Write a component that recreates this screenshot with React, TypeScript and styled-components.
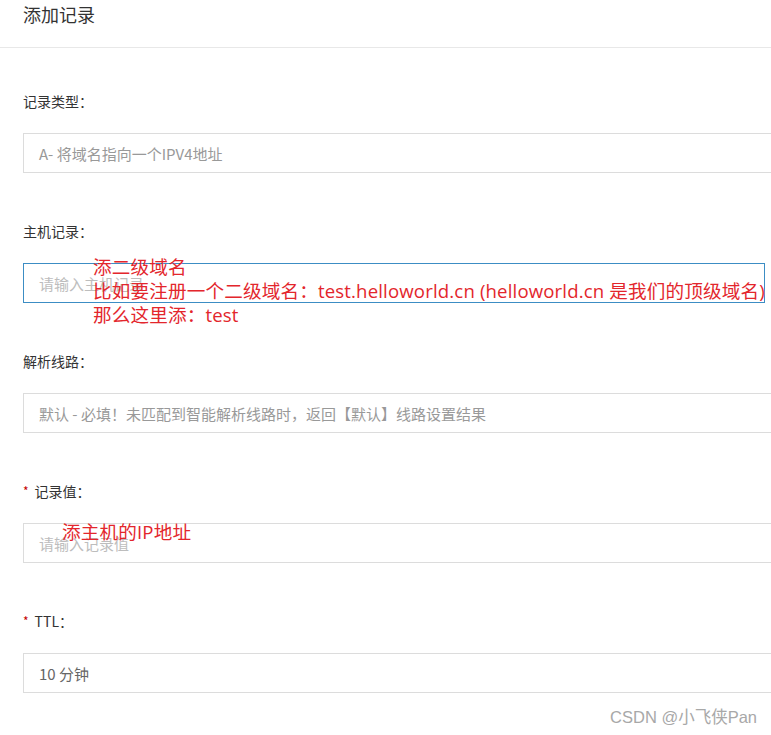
import styled, { createGlobalStyle } from 'styled-components';

const GlobalStyle = createGlobalStyle`
  html, body {
    margin: 0;
    padding: 0;
    background: #fff;
  }
  body {
    font-family: "Noto Sans CJK SC", "Noto Sans", sans-serif;
    overflow: hidden;
  }
`;

const Page = styled.div`
  position: relative;
  width: 771px;
  height: 735px;
  overflow: hidden;
  background: #fff;
`;

const Header = styled.div`
  height: 47px;
  border-bottom: 1px solid #e8e8e8;
  padding-left: 23px;
  box-sizing: content-box;
`;

const Title = styled.h2`
  margin: 0;
  font-size: 18px;
  line-height: 28px;
  font-weight: 400;
  color: #333;
`;

const Form = styled.div`
  display: flex;
  flex-direction: column;
  gap: 48px;
  padding: 43px 0 0 23px;
`;

const Field = styled.div`
  position: relative;
  display: flex;
  flex-direction: column;
  gap: 22px;
`;

const Label = styled.label`
  display: flex;
  align-items: center;
  height: 20px;
  font-size: 14px;
  line-height: 20px;
  color: #333;
`;

const Star = styled.span`
  color: #c40000;
  font-size: 12px;
  line-height: 1;
  margin-right: 6px;
`;

const Box = styled.div<{ $focused?: boolean; $tone?: 'placeholder' | 'value' | 'dark' }>`
  box-sizing: border-box;
  height: 40px;
  width: ${({ $focused }) => ($focused ? '742px' : '780px')};
  border: 1px solid ${({ $focused }) => ($focused ? '#3c8dc4' : '#dcdcdc')};
  padding-left: 15px;
  display: flex;
  align-items: center;
  font-size: 15px;
  color: ${({ $tone }) =>
    $tone === 'placeholder' ? '#bdbdbd' : $tone === 'dark' ? '#666' : '#999'};
  white-space: nowrap;
`;

const Note = styled.div<{ $top: number; $left: number }>`
  position: absolute;
  top: ${({ $top }) => $top}px;
  left: ${({ $left }) => $left}px;
  color: #e3262c;
  font-family: "Open Sans", "Noto Sans CJK SC", sans-serif;
  font-size: 18.6px;
  letter-spacing: 0.15px;
  line-height: 24px;
  white-space: nowrap;
`;

const Watermark = styled.div`
  position: absolute;
  right: 14px;
  bottom: 7px;
  font-size: 16.5px;
  color: #a8a8a8;
  font-family: "Liberation Sans", "Noto Sans CJK SC", sans-serif;
`;

export default function App() {
  return (
    <Page>
      <GlobalStyle />
      <Header>
        <Title>添加记录</Title>
      </Header>
      <Form>
        <Field>
          <Label>记录类型：</Label>
          <Box>A- 将域名指向一个IPV4地址</Box>
        </Field>
        <Field>
          <Label>主机记录：</Label>
          <Box $focused $tone="placeholder">请输入主机记录</Box>
          <Note $top={34} $left={70}>
            添二级域名
            <br />
            比如要注册一个二级域名：test.helloworld.cn (helloworld.cn 是我们的顶级域名)
            <br />
            那么这里添：test
          </Note>
        </Field>
        <Field>
          <Label>解析线路：</Label>
          <Box>默认 - 必填！未匹配到智能解析线路时，返回【默认】线路设置结果</Box>
        </Field>
        <Field>
          <Label>
            <Star>*</Star>记录值：
          </Label>
          <Box $tone="placeholder">请输入记录值</Box>
          <Note $top={39} $left={39}>添主机的IP地址</Note>
        </Field>
        <Field>
          <Label>
            <Star>*</Star>TTL：
          </Label>
          <Box $tone="dark">10 分钟</Box>
        </Field>
      </Form>
      <Watermark>CSDN @小飞侠Pan</Watermark>
    </Page>
  );
}
